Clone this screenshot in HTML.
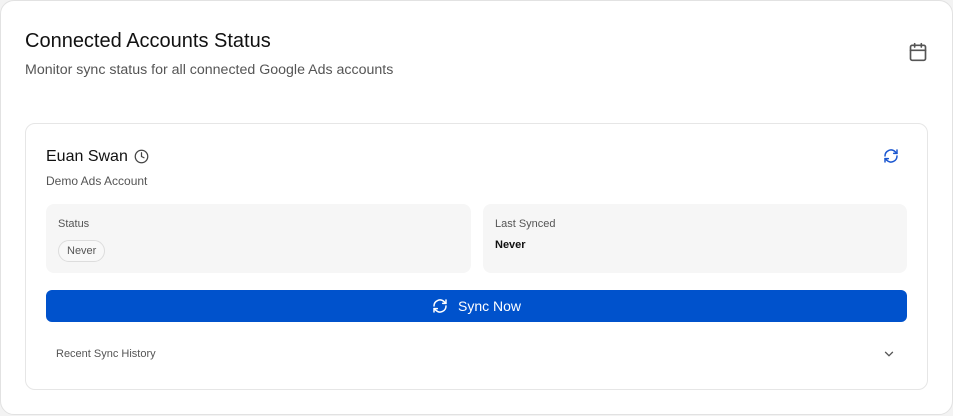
<!DOCTYPE html>
<html><head><style>
*{box-sizing:border-box;margin:0;padding:0}
body{width:953px;height:416px;background:#f3f3f3;font-family:"Liberation Sans",sans-serif;position:relative;overflow:hidden}
.outer{position:absolute;left:0;top:0;width:953px;height:415px;background:#fff;border:1px solid #e2e2e2;border-radius:14px}
.abs{position:absolute}
.inner{position:absolute;left:24px;top:122px;width:903px;height:267px;border:1px solid #e6e6e6;border-radius:10px;background:#fff}
.box{position:absolute;top:80px;height:69px;background:#f6f6f6;border-radius:8px}
</style></head><body>
<div class="outer">
 <div class="abs" style="left:24px;top:29px;font-size:20px;color:#111">Connected Accounts Status</div>
 <div class="abs" style="left:24px;top:61px;font-size:14.2px;color:#555">Monitor sync status for all connected Google Ads accounts</div>
 <svg class="abs" style="left:907px;top:41px" width="20" height="20" viewBox="0 0 24 24" fill="none" stroke="#555" stroke-width="2" stroke-linecap="round"><rect x="3" y="4" width="18" height="18" rx="2"/><path d="M16 2v4M8 2v4M3 10h18"/></svg>
 <div class="inner">
  <div class="abs" style="left:20px;top:24px;font-size:16px;color:#111">Euan Swan</div>
  <svg class="abs" style="left:108px;top:25px" width="15" height="15" viewBox="0 0 24 24" fill="none" stroke="#444" stroke-width="2" stroke-linecap="round"><circle cx="12" cy="12" r="10"/><path d="M12 6v6l4 2"/></svg>
  <div class="abs" style="left:20px;top:50px;font-size:12px;color:#555">Demo Ads Account</div>
  <svg class="abs" style="left:857px;top:24px" width="16" height="16" viewBox="0 0 24 24" fill="none" stroke="#1a56d0" stroke-width="2.2" stroke-linecap="round" stroke-linejoin="round"><path d="M3 12a9 9 0 0 1 15-6.7L21 8"/><path d="M21 3v5h-5"/><path d="M21 12a9 9 0 0 1-15 6.7L3 16"/><path d="M8 16H3v5"/></svg>
  <div class="box" style="left:20px;width:425px">
   <div class="abs" style="left:12px;top:14px;font-size:11px;color:#555">Status</div>
   <div class="abs" style="left:12px;top:36px;height:22px;padding:0 8px;border:1px solid #ddd;border-radius:11px;font-size:11px;color:#555;line-height:20px;background:#f8f8f8">Never</div>
  </div>
  <div class="box" style="left:457px;width:424px">
   <div class="abs" style="left:12px;top:14px;font-size:11px;color:#555">Last Synced</div>
   <div class="abs" style="left:12px;top:35px;font-size:11px;color:#111;font-weight:bold">Never</div>
  </div>
  <div class="abs" style="left:20px;top:166px;width:861px;height:32px;background:#0052cc;border-radius:6px;color:#fff;font-size:14px;line-height:32px;text-align:center">
   <svg style="vertical-align:-3px;margin-right:10px" width="16" height="16" viewBox="0 0 24 24" fill="none" stroke="#fff" stroke-width="2.2" stroke-linecap="round" stroke-linejoin="round"><path d="M3 12a9 9 0 0 1 15-6.7L21 8"/><path d="M21 3v5h-5"/><path d="M21 12a9 9 0 0 1-15 6.7L3 16"/><path d="M8 16H3v5"/></svg>Sync Now
  </div>
  <div class="abs" style="left:30px;top:224px;font-size:11px;color:#555">Recent Sync History</div>
  <svg class="abs" style="left:856px;top:223px" width="14" height="14" viewBox="0 0 24 24" fill="none" stroke="#555" stroke-width="2.2" stroke-linecap="round"><path d="M6 9l6 6 6-6"/></svg>
 </div>
</div>
</body></html>
